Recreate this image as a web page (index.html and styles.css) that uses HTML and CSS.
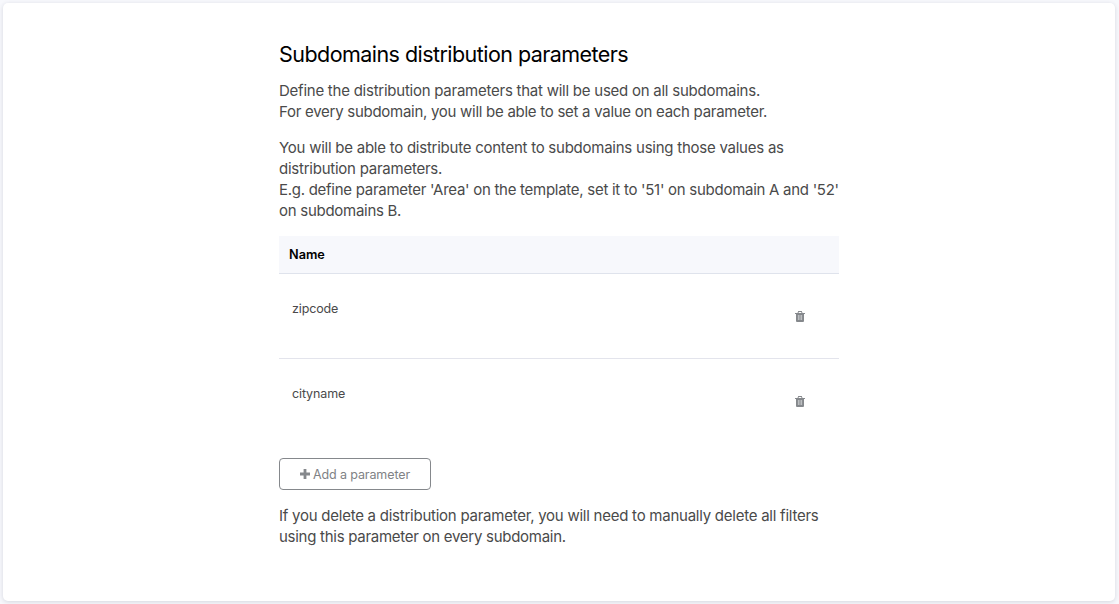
FILE: index.html
```html
<!DOCTYPE html>
<html lang="en">
<head>
<meta charset="utf-8">
<title>Subdomains distribution parameters</title>
<link rel="stylesheet" href="styles.css">
</head>
<body>
<main class="card">
  <div class="content">
    <h1 class="title">Subdomains distribution parameters</h1>
    <p class="text">Define the distribution parameters that will be used on all subdomains.<br><span class="tight">For every subdomain, you will be able to set a value on each parameter.</span></p>
    <p class="text">You will be able to distribute content to subdomains using those values as<br>distribution parameters.<br><span class="tight">E.g. define parameter 'Area' on the template, set it to '51' on subdomain A and '52'</span><br><span class="tight">on subdomains B.</span></p>
    <div class="table">
      <div class="head">Name</div>
      <div class="row"><span class="name">zipcode</span>
        <svg class="trash" viewBox="0 0 10 11"><path fill="#85888c" fill-rule="evenodd" d="M0 2h2.500L3.200 0h3.600l.7 2H10v1H9v7q0 1-1 1H2q-1 0-1-1V3H0zM3.500 2h3L6.200 1H3.800z"/><path stroke="#d2d4d6" stroke-width=".8" d="M3.400 4v5M5 4v5M6.600 4v5"/></svg>
      </div>
      <div class="row"><span class="name">cityname</span>
        <svg class="trash" viewBox="0 0 10 11"><path fill="#85888c" fill-rule="evenodd" d="M0 2h2.500L3.200 0h3.600l.7 2H10v1H9v7q0 1-1 1H2q-1 0-1-1V3H0zM3.500 2h3L6.200 1H3.800z"/><path stroke="#d2d4d6" stroke-width=".8" d="M3.400 4v5M5 4v5M6.600 4v5"/></svg>
      </div>
    </div>
    <button class="add"><svg class="plus" viewBox="0 0 10 10"><path d="M5 0v10M0 5h10" stroke="#85888c" stroke-width="2.800"/></svg><span>Add a parameter</span></button>
    <p class="text">If you delete a distribution parameter, you will need to manually delete all filters<br><span class="tight">using this parameter on every subdomain.</span></p>
  </div>
</main>
</body>
</html>
```
FILE: styles.css
```css
* { box-sizing: border-box; }
body { margin: 0; height: 604px; padding: 3px 4px 3px 3px; background: #f7f8fc; font-family: Inter, "Liberation Sans", sans-serif; overflow: hidden; }
.card { height: 598px; background: #fff; border-radius: 5px; box-shadow: 0 1px 4px rgba(40,45,70,.16); display: flex; justify-content: center; padding-top: 36px; }
.content { width: 560px; }
.title { margin: 0 0 10px; font-size: 21.5px; line-height: 31px; font-weight: 400; letter-spacing: -.55px; color: #000; white-space: nowrap; }
.text { margin: 0 0 15px; font-size: 15px; line-height: 21px; letter-spacing: -.245px; color: #4a4a4a; white-space: nowrap; }
.tight { letter-spacing: -.275px; }
.head { height: 38px; padding-left: 10px; background: #f7f8fc; border-bottom: 1px solid #dfe3ec; font-size: 12.7px; line-height: 38px; font-weight: 600; letter-spacing: 0; color: #000; }
.row { height: 85px; display: flex; justify-content: space-between; padding: 24px 34px 0 13px; border-bottom: 1px solid #e3e4ec; font-size: 12.5px; line-height: 21px; letter-spacing: -.13px; color: #4a4a4a; }
.row:last-child { border-bottom: 0; height: 99px; }
.trash { width: 10px; height: 11px; margin-top: 13px; }
.add { width: 152px; height: 32px; display: flex; align-items: center; justify-content: center; gap: 3px; margin: 0 0 15px; padding: 0; background: #fff; border: 1px solid #85888c; border-radius: 4px; font: 12.5px Inter, sans-serif; letter-spacing: -.11px; color: #808285; }
.plus { width: 10px; height: 10px; }
```
